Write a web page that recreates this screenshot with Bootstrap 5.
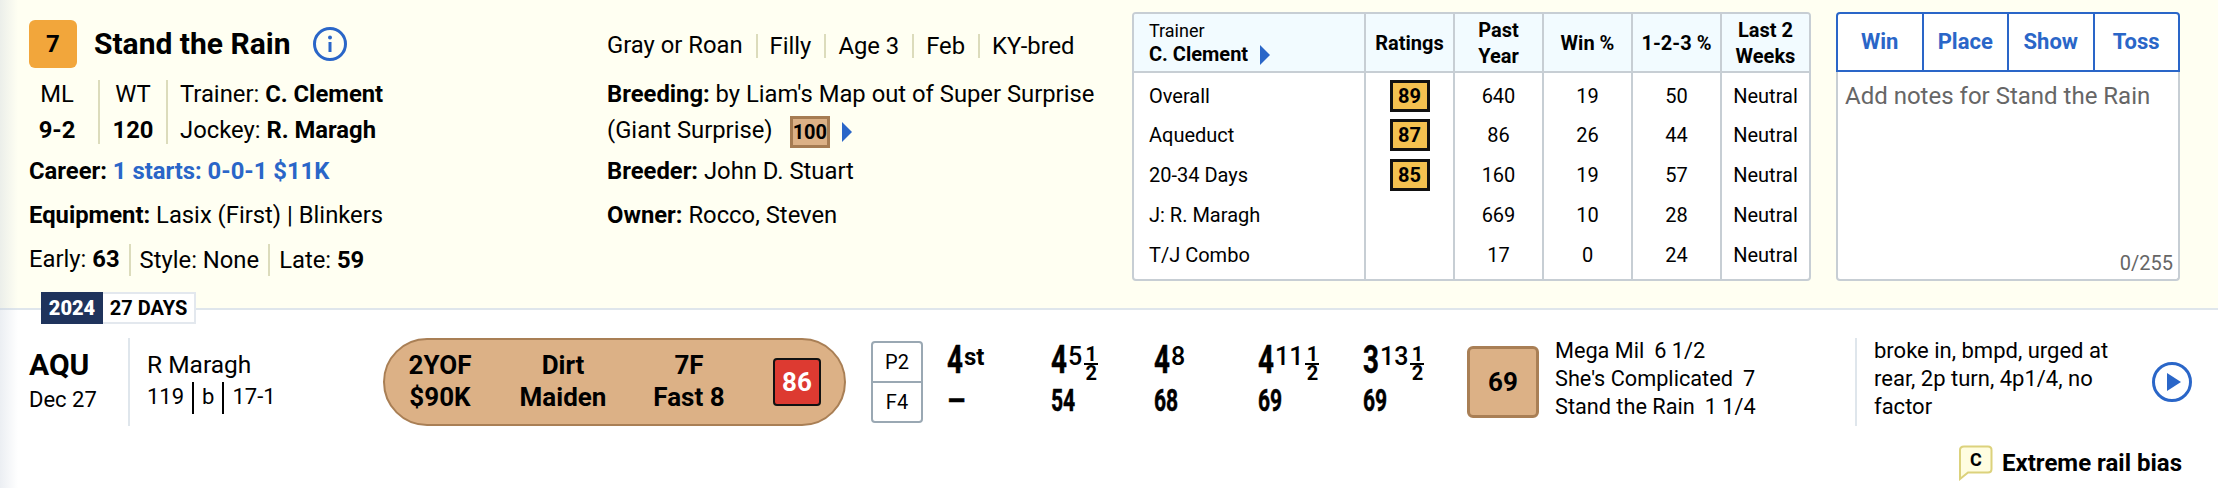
<!DOCTYPE html>
<html lang="en"><head><meta charset="utf-8"><title>Stand the Rain</title>
<link href="https://cdn.jsdelivr.net/npm/bootstrap@5.3.0/dist/css/bootstrap.min.css" rel="stylesheet">
<script src="https://cdn.jsdelivr.net/npm/bootstrap@5.3.0/dist/js/bootstrap.bundle.min.js"></script>
<style>
html,body{margin:0;background:#fff;overflow:hidden}
body{font-family:Roboto,"Liberation Sans",sans-serif;font-size:23.8px;color:#000;line-height:1.25}
.sheet{position:relative;width:2218px;height:488px}
.sheet::before{content:"";position:absolute;left:0;top:0;bottom:0;width:18px;z-index:3;pointer-events:none;background:linear-gradient(90deg,rgba(190,200,215,.3),rgba(190,200,215,0))}
.panel{height:308px;background:#fffff2}
.info-col{width:578px;padding:20px 0 0 29px}
.bio-col{width:554px;padding:24px 0 0 29px}
.num-box{width:48px;height:48px;background:#f2a63b;border-radius:6px;font-weight:700;font-size:24px}
.horse{font-size:30px;font-weight:700;margin-left:17px}
.info-ic{margin-left:23px}
.stats{height:64px;margin-top:12px;margin-bottom:6px}
.stat{text-align:center;border-right:2px solid #dcdcbc;height:64px;line-height:36px}
.stat>div,.people>div{margin-top:-4px}
.stat-a{width:71px;padding-right:13px}
.stat-b{width:68px}
.people{margin-left:12px;line-height:36px;height:64px;white-space:nowrap}
.ln{height:44px;display:flex;align-items:center;white-space:pre}
.blue{color:#2a66c8}
.seps>span+span{border-left:2px solid #dcdcbc;margin-left:9px;padding-left:9px;line-height:32px;display:inline-block}
.seps2>span+span{border-left:2px solid #dcdcbc;margin-left:13px;padding-left:12px;line-height:24px;display:inline-block}
.ln2{line-height:36px;padding-top:8px;margin-bottom:2px;white-space:nowrap}
.sire{display:inline-block;width:40px;height:32px;line-height:26px;text-align:center;background:#dcb186;border:3px solid #a67c52;font-weight:700;font-size:20px;margin:0 0 0 17px;vertical-align:middle}
.tri{display:inline-block;width:0;height:0;border-left:10px solid #2a66c8;border-top:10px solid transparent;border-bottom:10px solid transparent;margin-left:12px;vertical-align:middle}
.tr-wrap{width:679px;height:269px;margin-top:12px;border:2px solid #c7ced4;border-radius:4px;background:#fff;overflow:hidden}
.tr-table{table-layout:fixed;width:100%;margin:0;border-collapse:collapse;font-size:20px;line-height:24px;--bs-table-bg:transparent}
.tr-table th,.tr-table td{padding:0;border:0;border-left:2px solid #c7ced4;text-align:center;vertical-align:middle;color:#000}
.tr-table th:first-child,.tr-table td:first-child{border-left:0;text-align:left;padding-left:15px}
.tr-table thead th{height:58px;background:#f2fbff;border-bottom:2px solid #c7ced4;font-weight:700;font-size:20px;line-height:26px}
.tr-table tbody td{height:40px}
.tr-table tbody tr:first-child td{height:43px;padding-top:3px}
.tr-table tbody tr:last-child td{height:44px;padding-bottom:4px}
.tr-sm{font-weight:400;font-size:18px;line-height:22px;display:block}
.tr-name{display:block;line-height:24px}
.rate{display:inline-block;width:40px;height:32px;line-height:26px;background:#f4c150;border:3px solid #111;font-weight:700;font-size:20px;vertical-align:middle}
.notes{width:344px;height:269px;margin:12px 0 0 25px;position:relative}
.tabs-row{height:60px;border:2px solid #2a66c8;border-radius:4px 4px 0 0;background:#fff}
.tabs-row .btn{flex:1 1 0;border:0;border-radius:0;border-left:2px solid #2a66c8;color:#2a66c8;font-weight:700;font-size:22px;padding:0;line-height:1}
.tabs-row .btn:first-child{border-left:0}
.note-body{height:209px;background:#fff;border:2px solid #c7ced4;border-top:0;border-radius:0 0 4px 4px;position:relative}
.note-ph{color:#666;font-size:24px;line-height:30px;padding:9px 0 0 7px}
.cnt{position:absolute;right:5px;bottom:3px;color:#666;font-size:20px}
.divider{height:2px;background:#dfe6ec}
.low{position:relative;padding-top:28px}
.tag{position:absolute;left:41px;top:-18px;height:32px;z-index:2;font-size:20px;font-weight:700;line-height:32px}
.tag b{background:#1f335c;color:#fff;width:62px;text-align:center;display:block}
.tag i{font-style:normal;background:#fff;border:2px solid #e3e8ee;border-left:0;width:93px;text-align:center;display:block;line-height:28px}
.pp{height:88px;padding-left:29px}
.trk{width:101px;height:88px;border-right:2px solid #dfe6ec}
.trk b{font-size:30px;line-height:32px;display:block;margin-top:11px}
.trk span{display:block;font-size:22px;line-height:30px;margin-top:4px}
.jky{width:253px;padding-left:17px}
.jky div:first-child{font-size:24.5px;line-height:28px;margin-top:13px}
.jky div+div{font-size:22px;line-height:32px;margin-top:2px}
.jky u{text-decoration:none;border-left:2px solid #000;margin:0 8px;display:inline-block;height:32px;vertical-align:middle}
.pill{width:463px;height:88px;background:#dcb186;border:2px solid #a97f55;border-radius:44px;font-weight:700;font-size:26px;line-height:32px;flex:none}
.pill-c{position:absolute;top:9px;text-align:center;transform:translateX(-50%);white-space:nowrap}
.spd{position:absolute;left:388px;top:18px;width:48px;height:48px;background:#dd3a31;border:2px solid #111;border-radius:4px;color:#fff;text-align:center;line-height:44px}
.pf{width:52px;height:82px;border:2px solid #9aa8b3;border-radius:4px;margin:3px 0 0 25px;font-size:20px;flex:none}
.pf div{height:38px;line-height:38px;text-align:center}
.pf div+div{border-top:2px solid #9aa8b3;height:40px}
.calls{position:relative;width:544px;height:88px;flex:none}
.call{position:absolute;top:2px;white-space:nowrap}
.bg1{display:inline-block;font-weight:700;font-size:38px;line-height:40px;transform:scaleX(.73);transform-origin:left;width:17px;height:40px;vertical-align:top;-webkit-text-stroke:.5px #000}
.sm1{font-size:25px;font-weight:500;vertical-align:top;line-height:28px;display:inline-block;margin-top:3px}
.sm1.bd{font-weight:700;font-size:24px}
.frac{display:inline-flex;flex-direction:column;font-size:20px;font-weight:700;line-height:17px;width:14px;text-align:center;vertical-align:top;margin-top:6px;margin-left:2px}
.frac span:first-child{border-bottom:2px solid #000}
.bg2{position:absolute;top:45px;font-weight:700;font-size:31px;line-height:36px;transform:scaleX(.68);transform-origin:left;white-space:nowrap;-webkit-text-stroke:.5px #000}
.bg2.dash{transform:scaleX(.95)}
.fig{width:72px;height:72px;background:#dcb186;border:3px solid #a97f55;border-radius:6px;font-weight:700;font-size:26px;flex:none}
.fin{width:316px;padding-left:16px;font-size:21.7px;line-height:28px;flex:none;margin-top:-1px}
.fin i{font-style:normal;margin-left:10px}
.cmt{width:363px;height:88px;border-left:2px solid #dfe6ec;padding-left:17px;font-size:22px;line-height:28px;flex:none}
.cmt-t{width:262px;flex:none;align-self:flex-start;margin-top:-1px}
.bias{margin-top:19px;padding-right:36px;font-weight:700;font-size:24px}
.bub{margin-right:9px}
</style></head><body>
<div class="sheet">
<div class="panel d-flex">
  <div class="info-col flex-shrink-0">
    <div class="d-flex align-items-center">
      <div class="num-box d-flex align-items-center justify-content-center">7</div>
      <div class="horse">Stand the Rain</div>
      <svg class="info-ic" width="34" height="34" viewBox="0 0 34 34"><circle cx="17" cy="17" r="15.5" fill="none" stroke="#2a66c8" stroke-width="3"/><circle cx="17" cy="10.5" r="2" fill="#2a66c8"/><rect x="15.5" y="15" width="3" height="10" fill="#2a66c8"/></svg>
    </div>
    <div class="stats d-flex">
      <div class="stat stat-a"><div>ML<br><b>9-2</b></div></div>
      <div class="stat stat-b"><div>WT<br><b>120</b></div></div>
      <div class="people"><div>Trainer: <b>C. Clement</b><br>Jockey: <b>R. Maragh</b></div></div>
    </div>
    <div class="ln"><b>Career: </b><b class="blue">1 starts: 0-0-1 $11K</b></div>
    <div class="ln"><b>Equipment: </b>Lasix (First) | Blinkers</div>
    <div class="ln seps"><span>Early: <b>63</b></span><span>Style: None</span><span>Late: <b>59</b></span></div>
  </div>
  <div class="bio-col flex-shrink-0">
    <div class="ln seps2"><span>Gray or Roan</span><span>Filly</span><span>Age 3</span><span>Feb</span><span>KY-bred</span></div>
    <div class="ln2"><b>Breeding:</b> by Liam's Map out of Super Surprise<br>(Giant Surprise)<span class="sire">100</span><span class="tri"></span></div>
    <div class="ln"><b>Breeder: </b>John D. Stuart</div>
    <div class="ln"><b>Owner: </b>Rocco, Steven</div>
  </div>
  <div class="tr-wrap flex-shrink-0">
    <table class="table tr-table">
      <colgroup><col style="width:231px"><col style="width:89px"><col style="width:89px"><col style="width:89px"><col style="width:89px"><col></colgroup>
      <thead><tr><th><span class="tr-sm">Trainer</span><span class="tr-name">C. Clement<span class="tri"></span></span></th><th>Ratings</th><th>Past<br>Year</th><th>Win %</th><th>1-2-3 %</th><th>Last 2<br>Weeks</th></tr></thead>
      <tbody>
      <tr><td>Overall</td><td><span class="rate">89</span></td><td>640</td><td>19</td><td>50</td><td>Neutral</td></tr>
      <tr><td>Aqueduct</td><td><span class="rate">87</span></td><td>86</td><td>26</td><td>44</td><td>Neutral</td></tr>
      <tr><td>20-34 Days</td><td><span class="rate">85</span></td><td>160</td><td>19</td><td>57</td><td>Neutral</td></tr>
      <tr><td>J: R. Maragh</td><td></td><td>669</td><td>10</td><td>28</td><td>Neutral</td></tr>
      <tr><td>T/J Combo</td><td></td><td>17</td><td>0</td><td>24</td><td>Neutral</td></tr>
      </tbody>
    </table>
  </div>
  <div class="notes flex-shrink-0">
    <div class="tabs-row d-flex"><button class="btn">Win</button><button class="btn">Place</button><button class="btn">Show</button><button class="btn">Toss</button></div>
    <div class="note-body"><div class="note-ph">Add notes for Stand the Rain</div><div class="cnt">0/255</div></div>
  </div>
</div>
<div class="divider"></div>
<div class="low">
  <div class="tag d-flex"><b>2024</b><i>27 DAYS</i></div>
  <div class="pp d-flex">
    <div class="trk flex-shrink-0"><b>AQU</b><span>Dec 27</span></div>
    <div class="jky flex-shrink-0"><div>R Maragh</div><div>119<u></u>b<u></u>17-1</div></div>
    <div class="pill position-relative">
      <div class="pill-c" style="left:55px">2YOF<br>$90K</div>
      <div class="pill-c" style="left:178px">Dirt<br>Maiden</div>
      <div class="pill-c" style="left:304px">7F<br>Fast 8</div>
      <div class="spd">86</div>
    </div>
    <div class="pf"><div>P2</div><div>F4</div></div>
    <div class="calls">
      <div class="call" style="left:24px"><span class="bg1">4</span><span class="sm1 bd">st</span></div><div class="bg2 dash" style="left:24px">–</div>
      <div class="call" style="left:128px"><span class="bg1">4</span><span class="sm1">5</span><span class="frac"><span>1</span><span>2</span></span></div><div class="bg2" style="left:128px">54</div>
      <div class="call" style="left:231px"><span class="bg1">4</span><span class="sm1">8</span></div><div class="bg2" style="left:231px">68</div>
      <div class="call" style="left:335px"><span class="bg1">4</span><span class="sm1">11</span><span class="frac"><span>1</span><span>2</span></span></div><div class="bg2" style="left:335px">69</div>
      <div class="call" style="left:440px"><span class="bg1">3</span><span class="sm1">13</span><span class="frac"><span>1</span><span>2</span></span></div><div class="bg2" style="left:440px">69</div>
    </div>
    <div class="fig d-flex align-items-center justify-content-center align-self-center">69</div>
    <div class="fin"><div>Mega Mil<i>6 1/2</i></div><div>She's Complicated<i>7</i></div><div>Stand the Rain<i>1 1/4</i></div></div>
    <div class="cmt d-flex align-items-center">
      <div class="cmt-t">broke in, bmpd, urged at rear, 2p turn, 4p1/4, no factor</div>
      <svg class="flex-shrink-0 ms-auto" style="margin-right:26px" width="40" height="40" viewBox="0 0 40 40"><circle cx="20" cy="20" r="18.5" fill="none" stroke="#2a66c8" stroke-width="3"/><path d="M15 11 L29 20 L15 29 Z" fill="#2a66c8"/></svg>
    </div>
  </div>
  <div class="bias d-flex justify-content-end align-items-center">
    <svg class="bub flex-shrink-0" width="34" height="36" viewBox="0 0 34 36"><path d="M5 1.5 H29 Q32.5 1.5 32.5 5 V24 Q32.5 27.5 29 27.5 H9 L1 34 V5 Q1 1.5 5 1.5 Z" fill="#fffde0" stroke="#dcd27c" stroke-width="2"/><text x="17" y="20.5" font-family="Roboto,sans-serif" font-size="18" font-weight="700" text-anchor="middle" fill="#000">C</text></svg>
    <span>Extreme rail bias</span>
  </div>
</div>
</div>
</body></html>
